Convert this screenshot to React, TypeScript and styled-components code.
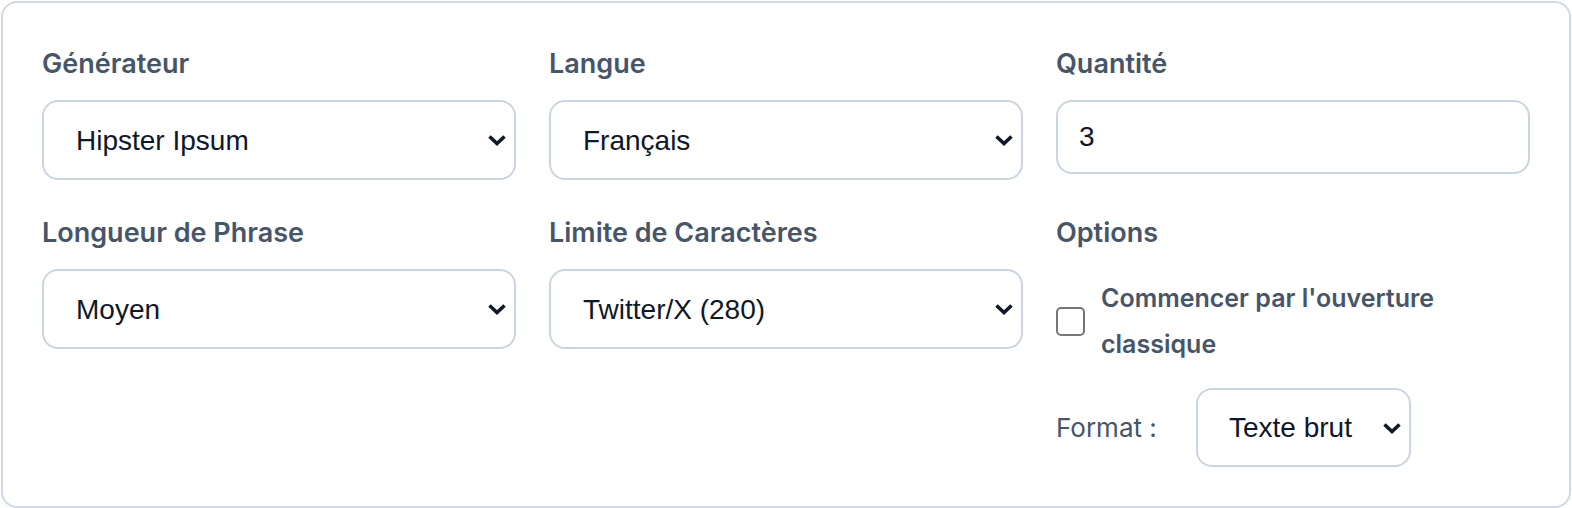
import React from 'react';
import styled, { createGlobalStyle } from 'styled-components';

const GlobalStyle = createGlobalStyle`
  html, body {
    margin: 0;
    padding: 0;
    background: #ffffff;
  }
`;

const Card = styled.div`
  margin: 1px;
  border: 2px solid #cfd8e3;
  border-radius: 16px;
  padding: 41px 39px 39px 39px;
  display: grid;
  grid-template-columns: repeat(3, 1fr);
  column-gap: 33px;
  row-gap: 33px;
  align-items: start;
  background: #ffffff;
`;

const Field = styled.div`
  display: flex;
  flex-direction: column;
  min-width: 0;
`;

const Label = styled.label`
  font-family: Inter, 'Liberation Sans', sans-serif;
  font-weight: 600;
  font-size: 27px;
  line-height: 40px;
  color: #475569;
  margin-bottom: 16px;
`;

const SelectWrap = styled.div<{ $width?: number }>`
  position: relative;
  width: ${(p) => (p.$width ? `${p.$width}px` : '100%')};
`;

const Select = styled.select<{ $height?: number; $pad?: number; $padRight?: number }>`
  appearance: none;
  -webkit-appearance: none;
  width: 100%;
  height: ${(p) => p.$height ?? 80}px;
  box-sizing: border-box;
  border: 2px solid #cbd5e1;
  border-radius: 16px;
  padding: 0 ${(p) => p.$padRight ?? 56}px 0 ${(p) => p.$pad ?? 32}px;
  font-family: 'Liberation Sans', Arial, sans-serif;
  font-size: 28px;
  color: #0f172a;
  background: #ffffff;
  outline: none;
`;

const Chevron = styled.svg`
  position: absolute;
  right: 9px;
  top: 50%;
  transform: translateY(-50%);
  pointer-events: none;
`;

const NumberInput = styled.input`
  appearance: none;
  -moz-appearance: textfield;
  width: 100%;
  height: 74px;
  box-sizing: border-box;
  border: 2px solid #cbd5e1;
  border-radius: 16px;
  padding: 0 21px;
  font-family: 'Liberation Sans', Arial, sans-serif;
  font-size: 28px;
  color: #0f172a;
  background: #ffffff;
  outline: none;
  &::-webkit-inner-spin-button,
  &::-webkit-outer-spin-button {
    -webkit-appearance: none;
    margin: 0;
  }
`;

const CheckRow = styled.label`
  display: flex;
  align-items: center;
  gap: 16px;
  margin-top: 6px;
`;

const Checkbox = styled.input`
  appearance: none;
  -webkit-appearance: none;
  flex-shrink: 0;
  width: 29px;
  height: 29px;
  margin: 0;
  border: 2px solid #767676;
  border-radius: 5px;
  background: #ffffff;
`;

const CheckText = styled.span`
  font-family: Inter, 'Liberation Sans', sans-serif;
  font-weight: 600;
  font-size: 25px;
  line-height: 46px;
  color: #475569;
`;

const FormatRow = styled.div`
  display: flex;
  align-items: center;
  gap: 35px;
  margin-top: 21px;
`;

const FormatLabel = styled.span`
  font-family: Inter, 'Liberation Sans', sans-serif;
  font-size: 26px;
  color: #475569;
  width: 105px;
`;

const ChevronIcon = () => (
  <Chevron width="20" height="12" viewBox="0 0 20 12">
    <polyline
      points="2.5,2.5 10,9.5 17.5,2.5"
      fill="none"
      stroke="#111827"
      strokeWidth="3.6"
      strokeLinejoin="miter"
    />
  </Chevron>
);

const DropDown = ({
  value,
  options,
  width,
  height,
  pad,
  padRight,
}: {
  value: string;
  options: string[];
  width?: number;
  height?: number;
  pad?: number;
  padRight?: number;
}) => (
  <SelectWrap $width={width}>
    <Select defaultValue={value} $height={height} $pad={pad} $padRight={padRight}>
      {options.map((o) => (
        <option key={o}>{o}</option>
      ))}
    </Select>
    <ChevronIcon />
  </SelectWrap>
);

const App = () => {
  return (
    <>
      <GlobalStyle />
      <Card>
        <Field>
          <Label>Générateur</Label>
          <DropDown value="Hipster Ipsum" options={['Lorem Ipsum', 'Hipster Ipsum', 'Bacon Ipsum']} />
        </Field>
        <Field>
          <Label>Langue</Label>
          <DropDown value="Français" options={['Français', 'English', 'Español']} />
        </Field>
        <Field>
          <Label>Quantité</Label>
          <NumberInput type="number" defaultValue={3} />
        </Field>
        <Field>
          <Label>Longueur de Phrase</Label>
          <DropDown value="Moyen" options={['Court', 'Moyen', 'Long']} />
        </Field>
        <Field>
          <Label>Limite de Caractères</Label>
          <DropDown value="Twitter/X (280)" options={['Aucune', 'Twitter/X (280)', 'SMS (160)']} />
        </Field>
        <Field>
          <Label>Options</Label>
          <CheckRow>
            <Checkbox type="checkbox" />
            <CheckText>Commencer par l'ouverture classique</CheckText>
          </CheckRow>
          <FormatRow>
            <FormatLabel>Format :</FormatLabel>
            <DropDown
              value="Texte brut"
              options={['Texte brut', 'HTML', 'Markdown']}
              width={215}
              height={79}
              pad={31}
              padRight={36}
            />
          </FormatRow>
        </Field>
      </Card>
    </>
  );
};

export default App;
